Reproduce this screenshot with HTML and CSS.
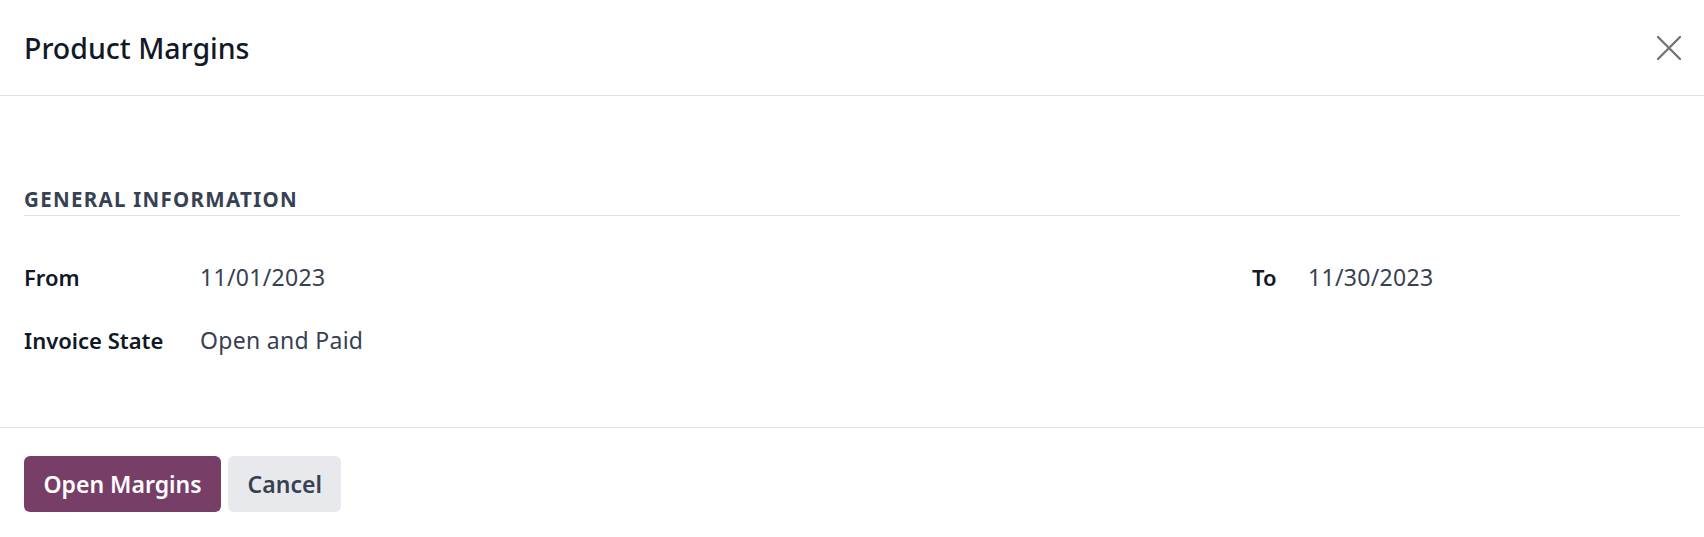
FILE: index.html
```html
<!DOCTYPE html>
<html lang="en">

<head>
    <title>Product Margins</title>
    <link rel="stylesheet" href="styles.css">
</head>

<body>
    <div class="modal">
        <div class="modal-header">
            <h1 class="modal-title">Product Margins</h1>
            <button class="btn-close" aria-label="Close">
                <svg width="24" height="24" viewBox="0 0 24 24">
                    <path d="M1 1 L23 23 M23 1 L1 23" stroke="#757575" stroke-width="2.4" stroke-linecap="round" />
                </svg>
            </button>
        </div>

        <div class="modal-body">
            <div class="section-title">General Information</div>
            <div class="form-grid">
                <label class="field-label">From</label>
                <span class="field-value">11/01/2023</span>
                <label class="field-label">To</label>
                <span class="field-value">11/30/2023</span>

                <label class="field-label">Invoice State</label>
                <span class="field-value">Open and Paid</span>
            </div>
        </div>

        <div class="modal-footer">
            <button class="btn btn-primary">Open Margins</button>
            <button class="btn btn-secondary">Cancel</button>
        </div>
    </div>
</body>

</html>
```

FILE: styles.css
```css
:root {
    --primary: #773f68;
    --secondary: #e7e9ed;
    --border-color: #dee2e6;
    --heading-color: #111827;
    --font-color: #374151;
}

body {
    font-family: 'Noto Sans', 'Open Sans', sans-serif;
    margin: 0;
    padding: 0;
    background-color: #fff;
    color: var(--font-color);
}

.modal {
    display: flex;
    flex-direction: column;
}

.modal-header {
    display: flex;
    justify-content: space-between;
    align-items: center;
    height: 95px;
    padding: 0 23px 0 24px;
    border-bottom: 1px solid var(--border-color);
}

.modal-title {
    margin: 0;
    font-size: 28.5px;
    font-weight: 500;
    line-height: 36px;
    color: var(--heading-color);
}

.btn-close {
    display: flex;
    border: none;
    background: none;
    padding: 0;
    cursor: pointer;
}

.modal-body {
    padding: 89px 24px 71px;
}

.section-title {
    font-size: 20.5px;
    font-weight: 700;
    line-height: 28px;
    text-transform: uppercase;
    letter-spacing: 1.3px;
    padding-bottom: 2px;
    border-bottom: 1px solid var(--border-color);
}

.form-grid {
    display: grid;
    grid-template-columns: 176px 1fr 56px 372px;
    grid-auto-rows: 32px;
    row-gap: 31px;
    align-items: center;
    margin-top: 45px;
}

.field-label {
    font-size: 22px;
    font-weight: 600;
    color: var(--heading-color);
}

.field-value {
    font-size: 23px;
    letter-spacing: 0.3px;
    color: var(--font-color);
}

.modal-footer {
    display: flex;
    gap: 7px;
    padding: 28px 24px 25px;
    border-top: 1px solid var(--border-color);
}

.btn {
    height: 56px;
    padding: 0 19.5px;
    border: none;
    border-radius: 6px;
    font-family: inherit;
    font-size: 23px;
    font-weight: 600;
    cursor: pointer;
}

.btn-primary {
    background-color: var(--primary);
    color: #fff;
}

.btn-secondary {
    background-color: var(--secondary);
    color: var(--font-color);
}
```
